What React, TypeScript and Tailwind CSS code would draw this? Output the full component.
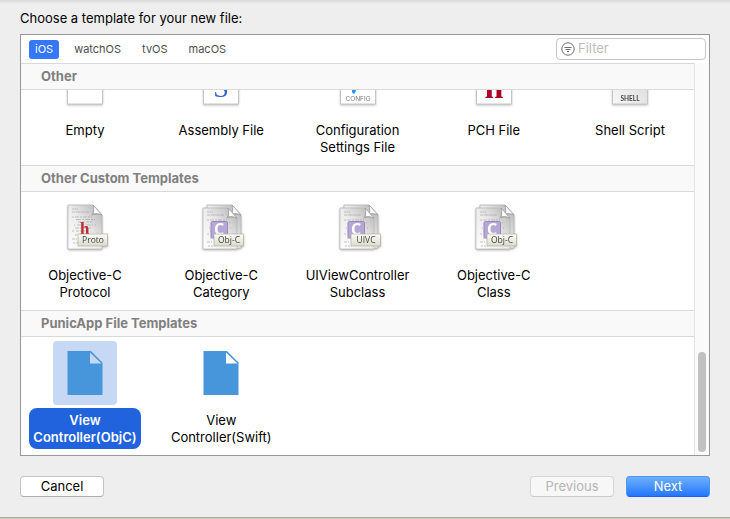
import { useId, useState, type ReactNode } from 'react';

type Template = { id: string; lines: string[]; icon: ReactNode };

function PlainSheet({ children, shaded }: { children?: ReactNode; shaded?: boolean }) {
  const id = useId();
  return (
    <svg viewBox="0 0 64 64" className="size-16 drop-shadow-[0_1px_1px_rgba(0,0,0,0.25)]" aria-hidden="true">
      <defs>
        <linearGradient id={id} x1="0" y1="1" x2="1" y2="0">
          <stop offset="0" stopColor={shaded ? '#f8f8f8' : '#fff'} />
          <stop offset="1" stopColor={shaded ? '#d4d4d4' : '#fff'} />
        </linearGradient>
      </defs>
      <path d="M14.500 8.500H39L49.500 19V53H14.500Z" fill={`url(#${id})`} stroke="#c6c6c6" />
      {children}
    </svg>
  );
}

const textRows: { y: number; x: number; end: number; dash: string }[] = [
  { y: 4, x: 4, end: 10, dash: '2 0.500' },
  { y: 7, x: 4, end: 21, dash: '3 0.700 5 0.700' },
  { y: 12, x: 4, end: 24, dash: '2 1 4 1' },
  { y: 14.5, x: 8, end: 27, dash: '5 1 2 1' },
  { y: 17, x: 10, end: 24, dash: '3 1' },
  { y: 20, x: 6, end: 28, dash: '1 2 5 1' },
  { y: 23, x: 7, end: 25, dash: '4 1 2 2' },
  { y: 26, x: 4, end: 20, dash: '2 2 3 1' },
  { y: 30, x: 7, end: 14, dash: '2 1' },
  { y: 34, x: 4, end: 9, dash: '3 1' },
  { y: 38, x: 5, end: 11, dash: '2 1' },
];

function CodeSheet({ x, y, height, gradient }: { x: number; y: number; height: number; gradient: string }) {
  return (
    <g transform={`translate(${x} ${y})`}>
      <path d={`M0 0H25L34 10V${height}H0Z`} fill={`url(#${gradient})`} stroke="#b4b4b4" strokeWidth="0.700" />
      {textRows.map((row) => (
        <path
          key={row.y}
          d={`M${row.x} ${row.y}H${row.end}`}
          stroke="#8a8a8a"
          strokeWidth="0.700"
          strokeDasharray={row.dash}
          opacity="0.700"
        />
      ))}
      <path d="M25 0C25.500 4 25 8 23 11C27 9 31 9 34 10.500Z" fill="#8c8c8c" opacity="0.500" />
      <path d="M25 0C26 3.500 26 6.500 25 9C28 8 31 8.500 34 10Z" fill="#fdfdfd" stroke="#8e8e8e" strokeWidth="0.600" />
    </g>
  );
}

function ObjcIcon({ label, kind }: { label: string; kind: 'header' | 'class' }) {
  const id = useId();
  return (
    <svg viewBox="0 0 64 64" className="size-16 drop-shadow-[0_1px_1px_rgba(0,0,0,0.3)]" aria-hidden="true">
      <defs>
        <linearGradient id={`${id}s`} x1="0" y1="1" x2="1" y2="0">
          <stop offset="0" stopColor="#fefefe" />
          <stop offset="0.500" stopColor="#ececec" />
          <stop offset="1" stopColor="#b0b0b0" />
        </linearGradient>
        <linearGradient id={`${id}t`} x1="0" y1="0" x2="0" y2="1">
          <stop offset="0" stopColor="#fbfbf5" />
          <stop offset="1" stopColor="#dcdccc" />
        </linearGradient>
      </defs>
      {kind === 'header' ? (
        <>
          <CodeSheet x={15} y={9} height={44} gradient={`${id}s`} />
          <text x="27" y="38" fontSize="17" fontWeight="700" fill="#c02a33" fontFamily="Liberation Serif, serif">
            h
          </text>
        </>
      ) : (
        <>
          <CodeSheet x={18} y={9} height={43} gradient={`${id}s`} />
          <CodeSheet x={14} y={12} height={41} gradient={`${id}s`} />
          <rect x="22" y="25.500" width="16.500" height="16.500" rx="1.500" fill="#b7a7d6" stroke="#9988c0" />
          <text x="30" y="38.500" textAnchor="middle" fontSize="16" fontWeight="700" fill="#fff" fontFamily="Open Sans, sans-serif">
            C
          </text>
        </>
      )}
      <rect x="25" y="38" width="29.500" height="12" fill={`url(#${id}t)`} stroke="#a8a89c" strokeWidth="0.600" />
      <text x="40" y="47" textAnchor="middle" fontSize="8.500" fill="#444" fontFamily="Open Sans, sans-serif">
        {label}
      </text>
    </svg>
  );
}

function BlueSheet() {
  return (
    <svg viewBox="0 0 64 64" className="size-16" aria-hidden="true">
      <path fillRule="evenodd" d="M14.500 10H38L49.500 21.500V54H14.500ZM37 11.500V22.500H48.500Z" fill="#4796dc" />
    </svg>
  );
}

const other: Template[] = [
  { id: 'empty', lines: ['Empty'], icon: <PlainSheet /> },
  {
    id: 'assembly',
    lines: ['Assembly File'],
    icon: (
      <PlainSheet>
        <text x="32" y="46" textAnchor="middle" fontSize="28" fill="#2c62c9" fontFamily="Liberation Serif, serif">
          S
        </text>
      </PlainSheet>
    ),
  },
  {
    id: 'config',
    lines: ['Configuration', 'Settings File'],
    icon: (
      <PlainSheet>
        <path d="M26 38L31 37L29 42Q27 44 26 41Z" fill="#2a95f5" />
        <text x="32" y="50" textAnchor="middle" fontSize="6.500" fill="#777" fontFamily="Inter, sans-serif">
          CONFIG
        </text>
      </PlainSheet>
    ),
  },
  {
    id: 'pch',
    lines: ['PCH File'],
    icon: (
      <PlainSheet>
        <text x="32" y="47" textAnchor="middle" fontSize="34" fontWeight="700" fill="#a90526" fontFamily="Liberation Serif, serif">
          h
        </text>
      </PlainSheet>
    ),
  },
  {
    id: 'shell',
    lines: ['Shell Script'],
    icon: (
      <PlainSheet shaded>
        <text x="32" y="50" textAnchor="middle" fontSize="6.500" fontWeight="700" fill="#444" fontFamily="Lato, sans-serif">
          SHELL
        </text>
      </PlainSheet>
    ),
  },
];

const custom: Template[] = [
  { id: 'protocol', lines: ['Objective-C', 'Protocol'], icon: <ObjcIcon label="Proto" kind="header" /> },
  { id: 'category', lines: ['Objective-C', 'Category'], icon: <ObjcIcon label="Obj-C" kind="class" /> },
  { id: 'uivc', lines: ['UIViewController', 'Subclass'], icon: <ObjcIcon label="UIVC" kind="class" /> },
  { id: 'class', lines: ['Objective-C', 'Class'], icon: <ObjcIcon label="Obj-C" kind="class" /> },
];

const punic: Template[] = [
  { id: 'objc', lines: ['View', 'Controller(ObjC)'], icon: <BlueSheet /> },
  { id: 'swift', lines: ['View', 'Controller(Swift)'], icon: <BlueSheet /> },
];

const platforms = ['iOS', 'watchOS', 'tvOS', 'macOS'];

type SectionProps = {
  title: string;
  items: Template[];
  selected: string;
  onSelect: (id: string) => void;
  scrolled?: boolean;
};

function Section({ title, items, selected, onSelect, scrolled }: SectionProps) {
  return (
    <section>
      <h2 className="flex h-[27px] items-center border-y border-[#d9d9d9] bg-[#f9f9f9] pl-5 font-bold text-[#808080]">
        {title}
      </h2>
      <div className={`flex flex-col justify-end overflow-hidden ${scrolled ? 'h-[75px]' : 'h-[118px]'}`}>
        <div className="grid shrink-0 grid-cols-[repeat(5,112px)] justify-between px-2 pt-1 pb-[6px]">
          {items.map((item) => {
            const on = item.id === selected;
            return (
              <button
                key={item.id}
                type="button"
                aria-pressed={on}
                onClick={() => onSelect(item.id)}
                className="flex flex-col items-center gap-[3px]"
              >
                <span className={`rounded-[4px] ${on ? 'bg-[#c7d8f4]' : ''}`}>{item.icon}</span>
                <span
                  className={`flex h-[41px] w-full flex-col items-center rounded-lg pt-1 leading-[17px] whitespace-nowrap ${
                    on ? 'bg-[#2063dc] font-semibold text-white' : ''
                  }`}
                >
                  {item.lines.map((line) => (
                    <span key={line}>{line}</span>
                  ))}
                </span>
              </button>
            );
          })}
        </div>
      </div>
    </section>
  );
}

export default function App() {
  const [platform, setPlatform] = useState('iOS');
  const [selected, setSelected] = useState('objc');
  const section = { selected, onSelect: setSelected };

  return (
    <div className="flex min-h-screen flex-col border-b border-[#d0cdb9] font-['Inter',sans-serif] text-[13px] text-black">
      <main className="grow border-b border-[#a9a99c] bg-[#eeeeee] bg-[linear-gradient(#d9d9d9,#eeeeee_4px)] px-5 pt-2 pb-[19px]">
        <h1 className="leading-5">Choose a template for your new file:</h1>

        <div className="mt-[6px] border border-[#979797] bg-white">
          <div className="flex h-7 items-center justify-between pr-[3px] pl-2">
            <nav className="flex gap-[9px] text-[11px]" aria-label="Platform">
              {platforms.map((name) => (
                <button
                  key={name}
                  type="button"
                  aria-pressed={name === platform}
                  onClick={() => setPlatform(name)}
                  className={`h-[19px] rounded-[3px] px-[6px] ${
                    name === platform ? 'bg-[#3478f9] text-white' : 'text-[#4d4d4d]'
                  }`}
                >
                  {name}
                </button>
              ))}
            </nav>
            <label className="flex h-[22px] w-[150px] items-center gap-[3px] rounded-[4px] border border-[#c6c6c6] bg-white pl-1">
              <svg viewBox="0 0 14 14" className="size-[14px] shrink-0" fill="none" stroke="#6e6e6e" aria-hidden="true">
                <circle cx="7" cy="7" r="6.200" />
                <path d="M3.500 5.500H10.500M4.500 7.500H9.500M6 9.500H8" />
              </svg>
              <input
                type="text"
                aria-label="Filter"
                placeholder="Filter"
                className="w-full min-w-0 bg-transparent outline-none placeholder:text-[#bdbdbd]"
              />
            </label>
          </div>

          <div className="flex">
            <div className="min-w-0 grow">
              <Section title="Other" items={other} scrolled {...section} />
              <Section title="Other Custom Templates" items={custom} {...section} />
              <Section title="PunicApp File Templates" items={punic} {...section} />
            </div>
            <div className="flex w-[15px] shrink-0 flex-col justify-end border-l border-[#e6e6e6] bg-[#fafafa] px-[3px] pb-[3px]">
              <div className="h-[100px] rounded-full bg-[#c1c1c1]" />
            </div>
          </div>
        </div>

        <div className="mt-5 flex gap-3">
          <button
            type="button"
            className="mr-auto h-[21px] w-[84px] rounded-[4px] border border-[#c4c4c4] border-b-[#adadad] bg-white"
          >
            Cancel
          </button>
          <button
            type="button"
            disabled
            className="h-[21px] w-[84px] rounded-[4px] border border-[#d6d6d6] border-b-[#cbcbcb] bg-[#f7f7f7] text-[#b5b5b5]"
          >
            Previous
          </button>
          <button
            type="button"
            className="h-[21px] w-[84px] rounded-[4px] border border-[#4a97f8] border-b-[#1a5ef5] bg-linear-to-b from-[#6cb0fa] to-[#2474fe] text-white"
          >
            Next
          </button>
        </div>
      </main>
    </div>
  );
}
